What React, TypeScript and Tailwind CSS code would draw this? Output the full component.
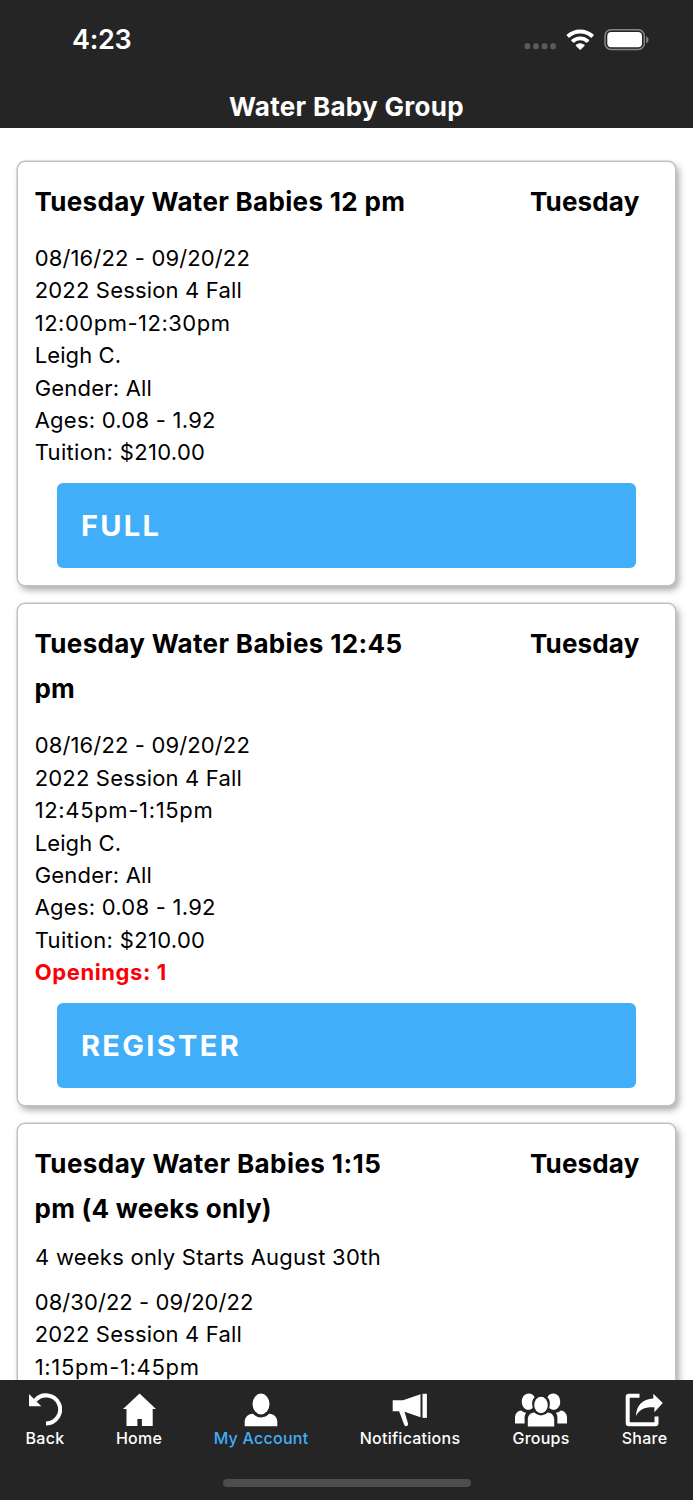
import type { ReactNode } from "react";

type ClassCard = {
  title: { text: string; spacing: string }[];
  day: string;
  note?: string;
  lines: { text: string; spacing: string }[];
  openings?: number;
  action?: string;
};

const cards: ClassCard[] = [
  {
    title: [{ text: "Tuesday Water Babies 12 pm", spacing: "tracking-[0.32px]" }],
    day: "Tuesday",
    lines: [
      { text: "08/16/22 - 09/20/22", spacing: "tracking-[0.13px]" },
      { text: "2022 Session 4 Fall", spacing: "tracking-[0.17px]" },
      { text: "12:00pm-12:30pm", spacing: "tracking-[0.5px]" },
      { text: "Leigh C.", spacing: "tracking-[0.1px]" },
      { text: "Gender: All", spacing: "tracking-[0.2px]" },
      { text: "Ages: 0.08 - 1.92", spacing: "tracking-[0.24px]" },
      { text: "Tuition: $210.00", spacing: "tracking-[0.32px]" },
    ],
    action: "FULL",
  },
  {
    title: [
      { text: "Tuesday Water Babies 12:45", spacing: "tracking-[0.34px]" },
      { text: "pm", spacing: "tracking-[0.1px]" },
    ],
    day: "Tuesday",
    lines: [
      { text: "08/16/22 - 09/20/22", spacing: "tracking-[0.13px]" },
      { text: "2022 Session 4 Fall", spacing: "tracking-[0.17px]" },
      { text: "12:45pm-1:15pm", spacing: "tracking-[0.65px]" },
      { text: "Leigh C.", spacing: "tracking-[0.1px]" },
      { text: "Gender: All", spacing: "tracking-[0.2px]" },
      { text: "Ages: 0.08 - 1.92", spacing: "tracking-[0.24px]" },
      { text: "Tuition: $210.00", spacing: "tracking-[0.32px]" },
    ],
    openings: 1,
    action: "REGISTER",
  },
  {
    title: [
      { text: "Tuesday Water Babies 1:15", spacing: "tracking-[0.42px]" },
      { text: "pm (4 weeks only)", spacing: "tracking-[0.24px]" },
    ],
    day: "Tuesday",
    note: "4 weeks only Starts August 30th",
    lines: [
      { text: "08/30/22 - 09/20/22", spacing: "tracking-[0.06px]" },
      { text: "2022 Session 4 Fall", spacing: "tracking-[0.17px]" },
      { text: "1:15pm-1:45pm", spacing: "tracking-[0.68px]" },
    ],
  },
];

function StatusBar() {
  return (
    <div className="flex h-[80px] shrink-0 items-center justify-between pl-[72px] pr-[44px]">
      <span className="text-[27px] font-semibold leading-8 tracking-[-0.3px]">4:23</span>
      <div className="flex items-center">
        <svg width="32" height="24" viewBox="0 0 32 24" fill="#5b5b5b">
          <rect x="0.6" y="15.2" width="5.6" height="6" rx="2" />
          <rect x="9.2" y="15.2" width="5.6" height="6" rx="2" />
          <rect x="17.7" y="15.2" width="5.6" height="6" rx="2" />
          <rect x="26.3" y="15.2" width="5.6" height="6" rx="2" />
        </svg>
        <svg className="ml-[10px]" width="28" height="22" viewBox="0 0 28 22" fill="#fff">
          <g transform="translate(0.2 -0.6)">
            <path d="M14 1C8.800 1 4 3 .7 6.200a.8.8 0 0 0 0 1.100l1.700 1.700a.8.8 0 0 0 1.100 0A15.200 15.200 0 0 1 14 5c4 0 7.700 1.500 10.500 4a.8.8 0 0 0 1.100 0l1.700-1.700a.8.8 0 0 0 0-1.100C24 3 19.200 1 14 1Z" />
            <path d="M14 8c-3.400 0-6.500 1.300-8.800 3.400a.8.8 0 0 0 0 1.100L7 14.200a.8.8 0 0 0 1.100 0 8.800 8.800 0 0 1 11.800 0 .8.8 0 0 0 1.100 0l1.800-1.700a.8.8 0 0 0 0-1.100A13 13 0 0 0 14 8Z" />
            <path d="M14 14.900c-1.600 0-3 .6-4.200 1.500a.8.8 0 0 0 0 1.200l3.600 3.600a.8.8 0 0 0 1.200 0l3.600-3.600a.8.8 0 0 0 0-1.200A6.600 6.600 0 0 0 14 14.900Z" />
          </g>
        </svg>
        <svg className="ml-[10px]" width="45" height="22" viewBox="0 0 45 22">
          <rect x="1" y="0.800" width="39.300" height="19.600" rx="6" fill="none" stroke="#868686" strokeWidth="1.500" />
          <rect x="3.300" y="3" width="34.700" height="15.200" rx="4" fill="#fff" />
          <path d="M42.200 7.300v7c1.400-.6 2.300-1.900 2.300-3.500s-.9-2.900-2.300-3.500Z" fill="#868686" />
        </svg>
      </div>
    </div>
  );
}

function Card({ card }: { card: ClassCard }) {
  return (
    <article className="shrink-0 rounded-[8px] border border-[#c0c0c0] bg-white pb-[16.500px] pl-[17px] pt-[17px] shadow-[0_0_0_0.500px_#c4c4c4,3px_4px_7px_rgba(0,0,0,0.34)]">
      <div className="flex items-start text-[26px] font-bold leading-[45.500px]">
        <h2 className="-ml-[0.500px] w-[495.500px]">
          {card.title.map((line) => (
            <span key={line.text} className={`block whitespace-nowrap ${line.spacing}`}>
              {line.text}
            </span>
          ))}
        </h2>
        <span className="tracking-[0.160px]">{card.day}</span>
      </div>
      {card.note ? (
        <p className="mb-[13px] mt-[9px] text-[22px] leading-[32.400px] tracking-[0.240px]">{card.note}</p>
      ) : (
        <div className="h-[17.500px]" />
      )}
      <div className="-ml-[0.300px] text-[22px] leading-[32.400px]">
        {card.lines.map((line) => (
          <p key={line.text} className={line.spacing}>
            {line.text}
          </p>
        ))}
        {card.openings !== undefined && (
          <p className="font-bold tracking-[0.600px] text-[#fb0007]">Openings: {card.openings}</p>
        )}
      </div>
      {card.action && (
        <button className="ml-[22px] mt-[14px] flex h-[85.500px] w-[579px] items-center rounded-[6px] bg-[#41aef9] pl-[24px] pt-[1px] text-[29px] font-bold tracking-[2.300px] text-white">
          {card.action}
        </button>
      )}
    </article>
  );
}

function Tab({ label, width, active, children }: { label: string; width: string; active?: boolean; children: ReactNode }) {
  return (
    <button className={`flex flex-col items-center ${width} ${active ? "text-[#41aef9]" : "text-white"}`}>
      <span className="flex h-[36px] items-center justify-center text-white">{children}</span>
      <span className="-mt-px whitespace-nowrap text-[16px] font-medium leading-[22px] tracking-[0.250px]">{label}</span>
    </button>
  );
}

function BackIcon() {
  return (
    <svg width="34" height="34" viewBox="0 0 34 34">
      <path d="M7.200 7.600A14 14 0 1 1 18 30.400" fill="none" stroke="currentColor" strokeWidth="4" />
      <path d="M1 1v12.300h12.300Z" fill="currentColor" />
    </svg>
  );
}

function HomeIcon() {
  return (
    <svg width="34" height="34" viewBox="0 0 34 34" fill="currentColor">
      <path d="M17.600 .6 34 16H30.700v17H19.900v-7h-4.500v7H4.500V16H1Z" />
    </svg>
  );
}

function AccountIcon() {
  return (
    <svg width="34" height="34" viewBox="0 0 34 34" fill="currentColor">
      <ellipse cx="17" cy="11" rx="8.500" ry="10.400" />
      <path d="M.7 33.300V29c0-4.500 3-7.800 8.200-8.200C11 23 13.500 24.400 17 24.400s6-1.400 8.100-3.600c5.200.4 8.200 3.700 8.200 8.200v4.300Z" />
    </svg>
  );
}

function MegaphoneIcon() {
  return (
    <svg width="36" height="34" viewBox="0 0 36 34" fill="currentColor">
      <path d="M.7 7.300H11L28.500 1.200V24.300L12.500 18.700l3.500 11.800c.4 1.300-.3 2.400-1.500 2.600-1 .2-1.800-.2-2.200-1.200L7.100 18.300H.7Z" />
      <path d="M30.500.8h4.400v24.100h-4.400Z" />
    </svg>
  );
}

function GroupsIcon() {
  return (
    <svg width="54" height="34" viewBox="0 0 54 34" fill="currentColor">
      <path d="M14.500.6c3 0 5.200 1.500 6.100 3.700-2 1.900-2.700 4.500-2.400 7.500l.5 3.200c-1.200 1.200-2.700 1.800-4.200 1.800-3.800 0-6.700-3.600-6.700-8.100S10.700.6 14.500.6Z" />
      <path d="M39.500.6c-3 0-5.200 1.500-6.100 3.700 2 1.900 2.700 4.500 2.400 7.500l-.5 3.200c1.200 1.200 2.700 1.800 4.200 1.800 3.800 0 6.700-3.600 6.700-8.100S43.300.6 39.500.6Z" />
      <ellipse cx="27" cy="12" rx="6.800" ry="8.300" />
      <path d="M1 30.600v-6c0-3.600 2.200-6.600 6.200-7.200 1.300 1.300 2.900 2 5 2.300-1 1.300-1.600 3-1.600 5v5.900Z" />
      <path d="M53 30.600v-6c0-3.600-2.200-6.600-6.200-7.200-1.300 1.300-2.900 2-5 2.300 1 1.300 1.600 3 1.600 5v5.900Z" />
      <path d="M13.800 33.400v-6.600c0-4.200 2.300-6.900 6.600-7.200 1.800 1.800 4 2.800 6.600 2.800s4.800-1 6.600-2.800c4.300.3 6.600 3 6.600 7.200v6.600Z" />
    </svg>
  );
}

function ShareIcon() {
  return (
    <svg className="-ml-[2px]" width="38" height="34" viewBox="0 0 38 34">
      <path d="M14.500 2.700H3.900Q2.700 2.700 2.700 3.900V30q0 1.200 1.200 1.200H30.300q1.200 0 1.200-1.200V23.500" fill="none" stroke="currentColor" strokeWidth="4" strokeLinejoin="round" />
      <path d="M28.300.7 37.800 10 29.400 19.300v-5.100C20 13.800 14.500 16 11 23 11.300 12.500 17.500 6 28.300 5.500Z" fill="currentColor" />
    </svg>
  );
}

export default function App() {
  return (
    <div className="flex h-[1500px] w-[693px] flex-col overflow-hidden bg-white font-['Inter','Liberation_Sans',sans-serif] text-black">
      <header className="flex h-[128px] shrink-0 flex-col bg-[#252525] text-white">
        <StatusBar />
        <h1 className="mt-[11px] text-center text-[26px] font-bold leading-8 tracking-[0.300px]">Water Baby Group</h1>
      </header>
      <main className="flex min-h-0 flex-1 flex-col gap-[17px] overflow-hidden pl-[17px] pr-[17px] pt-[33px]">
        {cards.map((card) => (
          <Card key={card.title[0].text} card={card} />
        ))}
      </main>
      <nav className="flex h-[120px] shrink-0 flex-col items-center bg-[#252525] pt-[12px]">
        <div className="flex w-full">
          <Tab label="Back" width="w-[90px]"><BackIcon /></Tab>
          <Tab label="Home" width="w-[98px]"><HomeIcon /></Tab>
          <Tab label="My Account" width="w-[146px]" active><AccountIcon /></Tab>
          <Tab label="Notifications" width="w-[152px]"><MegaphoneIcon /></Tab>
          <Tab label="Groups" width="w-[110px]"><GroupsIcon /></Tab>
          <Tab label="Share" width="w-[97px]"><ShareIcon /></Tab>
        </div>
        <div className="mt-[30px] h-[8px] w-[248px] rounded-full bg-[#4d4d4d]" />
      </nav>
    </div>
  );
}
